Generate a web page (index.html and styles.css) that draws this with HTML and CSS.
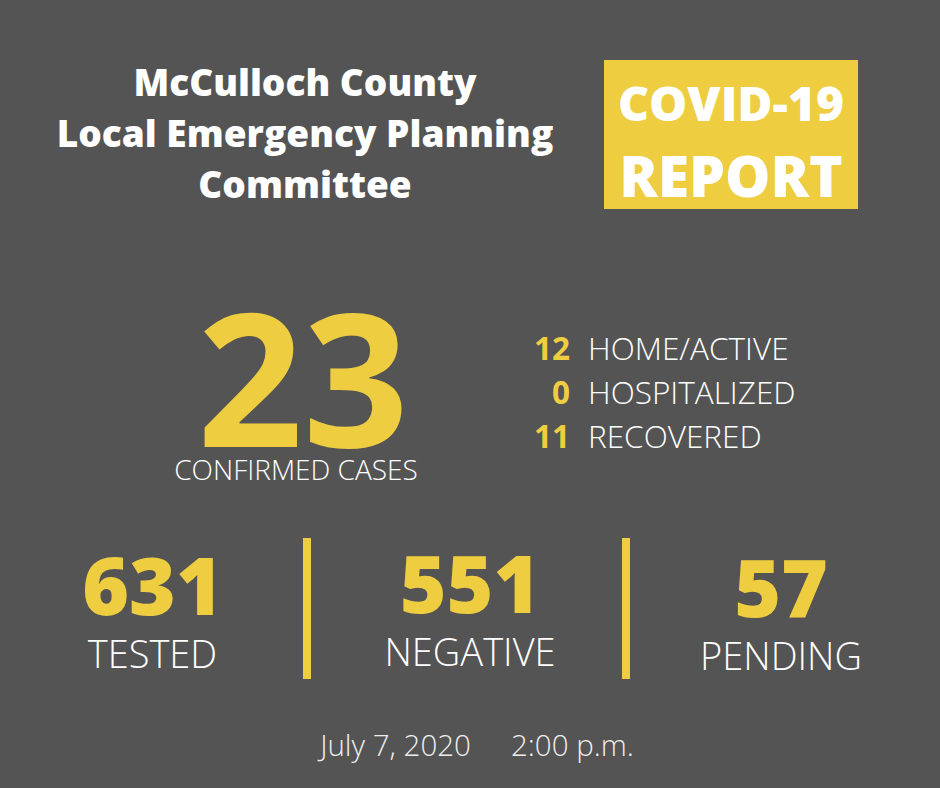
FILE: index.html
```html
<!DOCTYPE html>
<html lang="en">
<head>
<meta charset="utf-8">
<title>McCulloch County COVID-19 Report</title>
<link rel="stylesheet" href="styles.css">
</head>
<body>
<div class="page">
  <header class="header">
    <h1 class="title">McCulloch County<br>Local Emergency Planning<br>Committee</h1>
    <div class="badge">
      <span class="badge-line1">COVID-19</span>
      <span class="badge-line2">REPORT</span>
    </div>
  </header>

  <section class="cases">
    <div class="total">
      <div class="total-num">23</div>
      <div class="total-label">CONFIRMED CASES</div>
    </div>
    <div class="breakdown">
      <span class="b-num">12</span><span class="b-label">HOME/ACTIVE</span>
      <span class="b-num">0</span><span class="b-label">HOSPITALIZED</span>
      <span class="b-num">11</span><span class="b-label">RECOVERED</span>
    </div>
  </section>

  <section class="stats">
    <div class="stat stat-1">
      <div class="stat-num">631</div>
      <div class="stat-label">TESTED</div>
    </div>
    <div class="divider"></div>
    <div class="stat stat-2">
      <div class="stat-num">551</div>
      <div class="stat-label">NEGATIVE</div>
    </div>
    <div class="divider"></div>
    <div class="stat stat-3">
      <div class="stat-num">57</div>
      <div class="stat-label">PENDING</div>
    </div>
  </section>

  <footer class="date">
    <span>July 7, 2020</span>
    <span>2:00 p.m.</span>
  </footer>
</div>
</body>
</html>
```

FILE: styles.css
```css
html, body {
  margin: 0;
  padding: 0;
  background: #545454;
}

.page {
  width: 940px;
  height: 788px;
  overflow: hidden;
  background: #545454;
  font-family: "Open Sans", "DejaVu Sans", sans-serif;
  color: #ffffff;
  padding-top: 56px;
  box-sizing: border-box;
}

/* Header */
.header {
  display: flex;
  align-items: flex-start;
}

.title {
  margin: 0 0 0 40px;
  width: 530px;
  text-align: center;
  font-size: 37px;
  font-weight: 800;
  line-height: 51px;
  color: #ffffff;
}

.badge {
  margin: 4px 0 0 34px;
  width: 254px;
  height: 149px;
  box-sizing: border-box;
  background: #eecd41;
  padding-top: 13px;
  display: flex;
  flex-direction: column;
  align-items: center;
  font-weight: 800;
  color: #ffffff;
}

.badge-line1 {
  font-size: 48px;
  line-height: 60px;
}

.badge-line2 {
  font-size: 57px;
  line-height: 70px;
  margin-top: 7px;
}

/* Confirmed cases */
.cases {
  display: flex;
  align-items: flex-start;
  margin-top: 91px;
}

.total {
  margin-left: 166px;
  width: 260px;
  display: flex;
  flex-direction: column;
  align-items: center;
}

.total-num {
  font-size: 185px;
  font-weight: 700;
  line-height: 150px;
  color: #eecd41;
  padding-left: 14px;
}

.total-label {
  margin-top: 2px;
  font-size: 28px;
  font-weight: 300;
  line-height: 34px;
}

.breakdown {
  margin-left: 84px;
  margin-top: 26px;
  display: grid;
  grid-template-columns: 60px auto;
  column-gap: 18px;
  font-size: 31.5px;
  line-height: 44px;
}

.b-num {
  text-align: right;
  font-weight: 700;
  color: #eecd41;
}

.b-label {
  font-weight: 300;
}

/* Stats row */
.stats {
  display: flex;
  align-items: flex-start;
  margin-top: 52px;
}

.stat {
  display: flex;
  flex-direction: column;
  align-items: center;
  box-sizing: border-box;
}

.stat-1 { width: 303px; padding-top: 6px; padding-left: 2px; }
.stat-2 { width: 311px; padding-top: 4px; padding-left: 7px; }
.stat-3 { width: 302px; padding-top: 8px; }

.stat-num {
  font-size: 80px;
  font-weight: 800;
  line-height: 80px;
  color: #eecd41;
}

.stat-label {
  margin-top: 9px;
  font-size: 38px;
  font-weight: 300;
  line-height: 40px;
}

.divider {
  width: 8px;
  height: 141px;
  background: #eecd41;
}

/* Date */
.date {
  margin-top: 48px;
  padding-left: 14px;
  display: flex;
  justify-content: center;
  gap: 40px;
  font-size: 29.5px;
  font-weight: 300;
  line-height: 36px;
  color: #eeeeee;
}
```
